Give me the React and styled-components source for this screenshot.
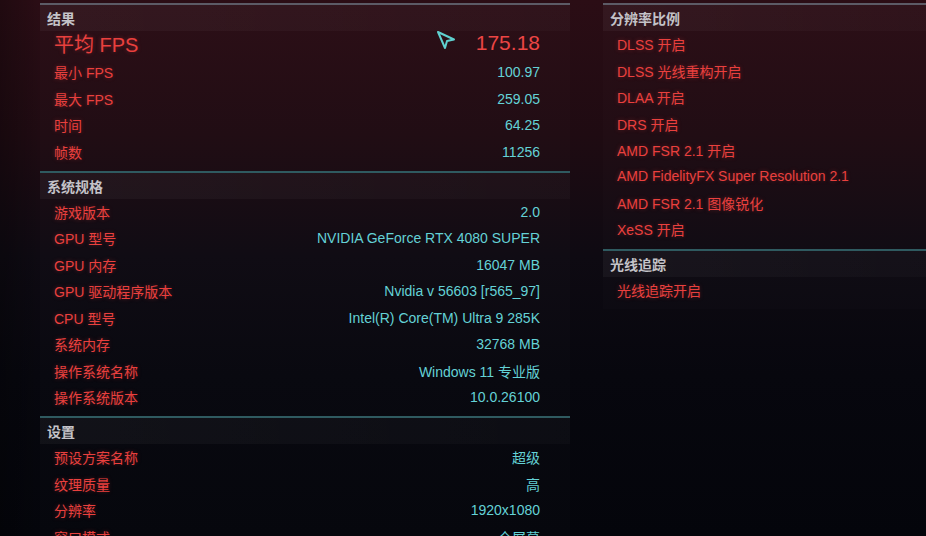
import React from "react";
import styled, { createGlobalStyle } from "styled-components";

const Global = createGlobalStyle`
  html, body {
    margin: 0;
    padding: 0;
    width: 926px;
    height: 536px;
    overflow: hidden;
  }
  body {
    background: linear-gradient(180deg, #2b0d15 0%, #1f0b12 25%, #0e0a12 48%, #07070e 70%, #04050b 100%);
    font-family: "Liberation Sans", "Noto Sans CJK SC", sans-serif;
  }
`;

const Page = styled.div`
  display: flex;
  gap: 33px;
  padding: 3px 0 0 40px;
  height: 533px;
  background: linear-gradient(90deg, rgba(0, 0, 0, 0.25) 0px, rgba(0, 0, 0, 0) 40px);
`;

const Column = styled.div`
  width: ${(p) => p.$width};
  flex: ${(p) => (p.$width ? "none" : "1")};
  display: flex;
  flex-direction: column;
`;

const Section = styled.section`
  border-top: 2px solid ${(p) => (p.$top ? "#5c5b66" : "#2f5a60")};
  padding-bottom: 6px;
  background: rgba(255, 255, 255, 0.012);
`;

const Header = styled.div`
  height: 26px;
  display: flex;
  align-items: center;
  padding-left: 7px;
  color: #c4c3c8;
  font-size: 14px;
  font-weight: bold;
  background: linear-gradient(90deg, rgba(255, 255, 255, 0.04), rgba(255, 255, 255, 0.02));
`;

const Row = styled.div`
  height: ${(p) => (p.$big ? "28px" : "26.45px")};
  box-sizing: border-box;
  display: flex;
  align-items: center;
  justify-content: space-between;
  padding: 0 30px ${(p) => (p.$big ? "4px" : "0")} 14px;
  font-size: ${(p) => (p.$big ? "20px" : "14px")};
`;

const Label = styled.span`
  color: #e9403e;
  text-shadow: 0 0 4px rgba(233, 64, 62, 0.35);
  white-space: nowrap;
`;

const Value = styled.span`
  display: flex;
  align-items: center;
  gap: 20px;
  color: ${(p) => (p.$red ? "#ec4544" : "#64d2d6")};
  font-size: ${(p) => (p.$big ? "21px" : "14px")};
  white-space: nowrap;
`;

const Pointer = () => (
  <svg width="20" height="20" viewBox="0 0 20 20" style={{ marginTop: "-6px" }}>
    <path
      d="M2 2 L18 9.5 L11 11 L9 18 Z"
      fill="none"
      stroke="#5fd0cf"
      strokeWidth="2"
      strokeLinejoin="round"
    />
  </svg>
);

const results = [
  ["最小 FPS", "100.97"],
  ["最大 FPS", "259.05"],
  ["时间", "64.25"],
  ["帧数", "11256"],
];

const specs = [
  ["游戏版本", "2.0"],
  ["GPU 型号", "NVIDIA GeForce RTX 4080 SUPER"],
  ["GPU 内存", "16047 MB"],
  ["GPU 驱动程序版本", "Nvidia v 56603 [r565_97]"],
  ["CPU 型号", "Intel(R) Core(TM) Ultra 9 285K"],
  ["系统内存", "32768 MB"],
  ["操作系统名称", "Windows 11 专业版"],
  ["操作系统版本", "10.0.26100"],
];

const settings = [
  ["预设方案名称", "超级"],
  ["纹理质量", "高"],
  ["分辨率", "1920x1080"],
  ["窗口模式", "全屏幕"],
];

const scaling = [
  "DLSS 开启",
  "DLSS 光线重构开启",
  "DLAA 开启",
  "DRS 开启",
  "AMD FSR 2.1 开启",
  "AMD FidelityFX Super Resolution 2.1",
  "AMD FSR 2.1 图像锐化",
  "XeSS 开启",
];

const Pairs = ({ items }) =>
  items.map(([k, v]) => (
    <Row key={k}>
      <Label>{k}</Label>
      <Value>{v}</Value>
    </Row>
  ));

export default function App() {
  return (
    <>
      <Global />
      <Page>
        <Column $width="530px">
          <Section $top>
            <Header>结果</Header>
            <Row $big>
              <Label>平均 FPS</Label>
              <Value $red $big>
                <Pointer />
                175.18
              </Value>
            </Row>
            <Pairs items={results} />
          </Section>
          <Section>
            <Header>系统规格</Header>
            <Pairs items={specs} />
          </Section>
          <Section>
            <Header>设置</Header>
            <Pairs items={settings} />
          </Section>
        </Column>
        <Column>
          <Section $top>
            <Header>分辨率比例</Header>
            {scaling.map((s) => (
              <Row key={s}>
                <Label>{s}</Label>
              </Row>
            ))}
          </Section>
          <Section>
            <Header>光线追踪</Header>
            <Row>
              <Label>光线追踪开启</Label>
            </Row>
          </Section>
        </Column>
      </Page>
    </>
  );
}
